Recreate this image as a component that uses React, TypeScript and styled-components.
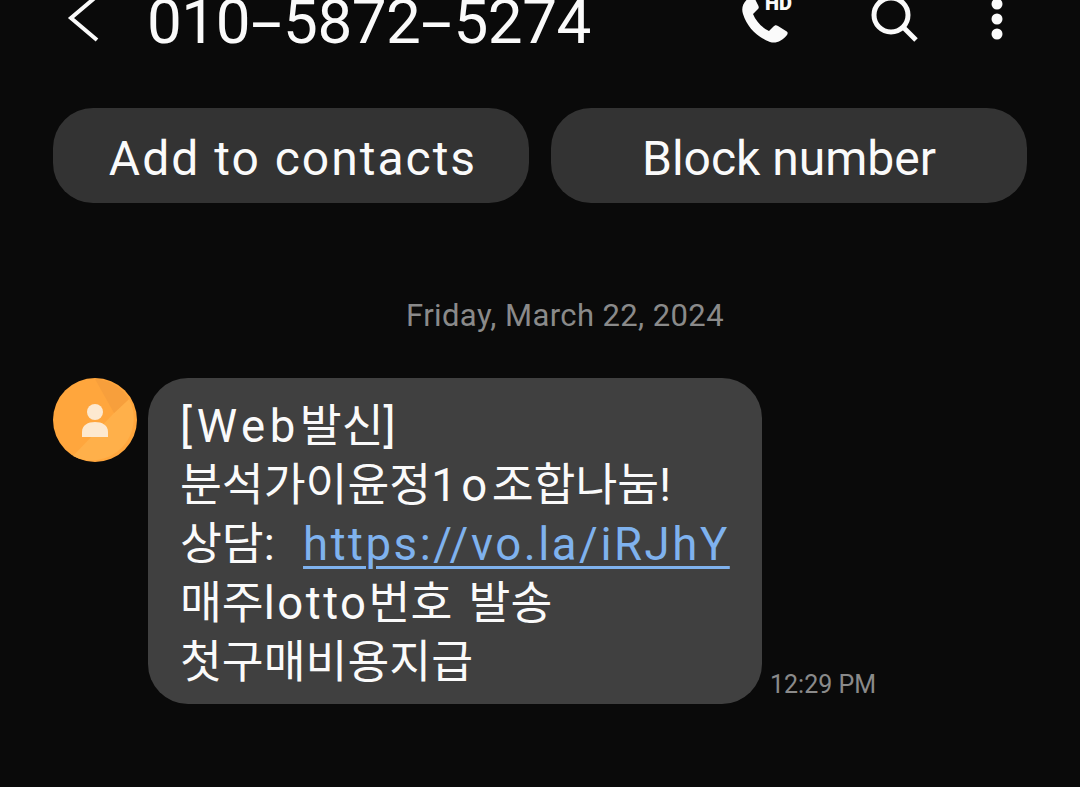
import React from "react";
import styled, { createGlobalStyle } from "styled-components";

const Global = createGlobalStyle`
  html, body { margin: 0; padding: 0; background: #0a0a0a; }
  body { font-family: Roboto, "Noto Sans CJK KR", sans-serif; }
`;

const Page = styled.div`
  width: 1080px;
  height: 787px;
  overflow: hidden;
  background: #0a0a0a;
  color: #fafafa;
  display: flex;
  flex-direction: column;
`;

const Header = styled.header`
  height: 50px;
  flex: none;
  display: flex;
  align-items: flex-end;
  padding-left: 68px;
`;

const BackButton = styled.svg`
  width: 32px;
  height: 50px;
  flex: none;
  overflow: visible;
`;

const PhoneNumber = styled.h1`
  margin: 0 0 -3px 47px;
  width: 520px;
  height: 62px;
  flex: none;
  font: 400 62px/62px Roboto, sans-serif;
  white-space: nowrap;
  letter-spacing: -0.5px;
`;

const Dash = styled.span`
  display: inline-block;
  width: 33px;
  text-align: center;
  letter-spacing: 0;
  transform: scaleX(1.8);
`;

const HeaderIcon = styled.svg<{ $gap: number }>`
  flex: none;
  display: block;
  margin-left: ${(p) => p.$gap}px;
`;

const Actions = styled.div`
  display: flex;
  gap: 22px;
  padding: 58px 53px 0;
`;

const ActionButton = styled.button<{ $spacing: number }>`
  flex: none;
  width: 476px;
  height: 95px;
  padding: 6px 0 0 ${(p) => p.$spacing * 2}px;
  border: 0;
  border-radius: 40px;
  background: #333333;
  color: #fafafa;
  font: 400 48px/1 Roboto, sans-serif;
  letter-spacing: ${(p) => p.$spacing}px;
`;

const DateLabel = styled.div`
  margin-top: 95px;
  padding-left: 50px;
  text-align: center;
  color: #8a8a8a;
  font: 400 31px/36px Roboto, sans-serif;
  letter-spacing: 0.4px;
`;

const Thread = styled.div`
  display: flex;
  align-items: flex-start;
  padding: 44px 0 0 53px;
`;

const Avatar = styled.svg`
  width: 84px;
  height: 84px;
  flex: none;
  margin-right: 11px;
`;

const Bubble = styled.div`
  width: 614px;
  height: 326px;
  box-sizing: border-box;
  padding: 19px 0 0 32px;
  background: #404040;
  border-radius: 40px;
  font: 400 45.5px/59px Roboto, "Noto Sans CJK KR", sans-serif;
  white-space: nowrap;
`;

const BubbleLine = styled.div<{ $wordGap?: number }>`
  height: 59px;
  word-spacing: ${(p) => p.$wordGap ?? 0}px;
`;

const Latin = styled.span<{ $spacing: number }>`
  letter-spacing: ${(p) => p.$spacing}px;
`;

const LinkText = styled.a`
  color: #7fb2ee;
  text-decoration: underline;
  text-decoration-thickness: 3px;
  text-underline-offset: 6px;
  margin-left: 17px;
  letter-spacing: 2.55px;
`;

const Time = styled.div`
  align-self: flex-end;
  margin: 0 0 1px 8px;
  color: #8a8a8a;
  font: 400 25px/36px Roboto, sans-serif;
`;

export default function App() {
  return (
    <Page>
      <Global />
      <Header>
        <BackButton viewBox="0 0 32 50">
          <path d="M29 -4 L3 18 L29 40" fill="none" stroke="#fafafa" strokeWidth="4" />
        </BackButton>
        <PhoneNumber>010<Dash>-</Dash>5872<Dash>-</Dash>5274</PhoneNumber>
        <HeaderIcon $gap={73} width="56" height="50" viewBox="0 0 56 50">
          <path
            d="M9 -2 C3 2 1 8 3 14 C7 27 17 37 30 42 C36 44 42 41 47 35 C48 33 48 32 46 31 L38 26 C36 25 35 25 33 27 L29 31 C21 27 16 21 13 14 L18 9 C19 8 19 7 18 5 L14 -3 Z"
            fill="#fafafa"
          />
          <text x="25" y="10" fontFamily="Roboto, sans-serif" fontWeight="900" fontSize="20" fill="#fafafa">HD</text>
        </HeaderIcon>
        <HeaderIcon $gap={75} width="56" height="50" viewBox="0 0 56 50">
          <circle cx="20" cy="15" r="17" fill="none" stroke="#fafafa" strokeWidth="5" />
          <path d="M32 27 L45 40" stroke="#fafafa" strokeWidth="5" />
        </HeaderIcon>
        <HeaderIcon $gap={62} width="16" height="50" viewBox="0 0 16 50">
          <circle cx="8" cy="4" r="5.5" fill="#fafafa" />
          <circle cx="8" cy="19" r="5.5" fill="#fafafa" />
          <circle cx="8" cy="34" r="5.5" fill="#fafafa" />
        </HeaderIcon>
      </Header>
      <Actions>
        <ActionButton $spacing={2}>Add to contacts</ActionButton>
        <ActionButton $spacing={0}>Block number</ActionButton>
      </Actions>
      <DateLabel>Friday, March 22, 2024</DateLabel>
      <Thread>
        <Avatar viewBox="0 0 84 84">
          <circle cx="42" cy="42" r="42" fill="#ffa63d" />
          <path d="M61 35 L76 21 A42 42 0 0 1 20 78 Z" fill="#ffb04a" />
          <path d="M42 1 A42 42 0 0 1 76 21 L61 35 Z" fill="#f79f3c" />
          <circle cx="42" cy="34" r="8" fill="#fde9d0" />
          <path d="M29 59 V54 C29 47 35 44 42 44 C49 44 55 47 55 54 V59 Z" fill="#fde9d0" />
        </Avatar>
        <Bubble>
          <BubbleLine><Latin $spacing={4.6}>[Web</Latin>발신<Latin $spacing={0}>]</Latin></BubbleLine>
          <BubbleLine>분석가이윤정<Latin $spacing={4.5}>1o</Latin>조합나눔!</BubbleLine>
          <BubbleLine>상담: <LinkText>https://vo.la/iRJhY</LinkText></BubbleLine>
          <BubbleLine $wordGap={5}>매주<Latin $spacing={2.5}>lotto</Latin>번호 발송</BubbleLine>
          <BubbleLine>첫구매비용지급</BubbleLine>
        </Bubble>
        <Time>12:29 PM</Time>
      </Thread>
    </Page>
  );
}
